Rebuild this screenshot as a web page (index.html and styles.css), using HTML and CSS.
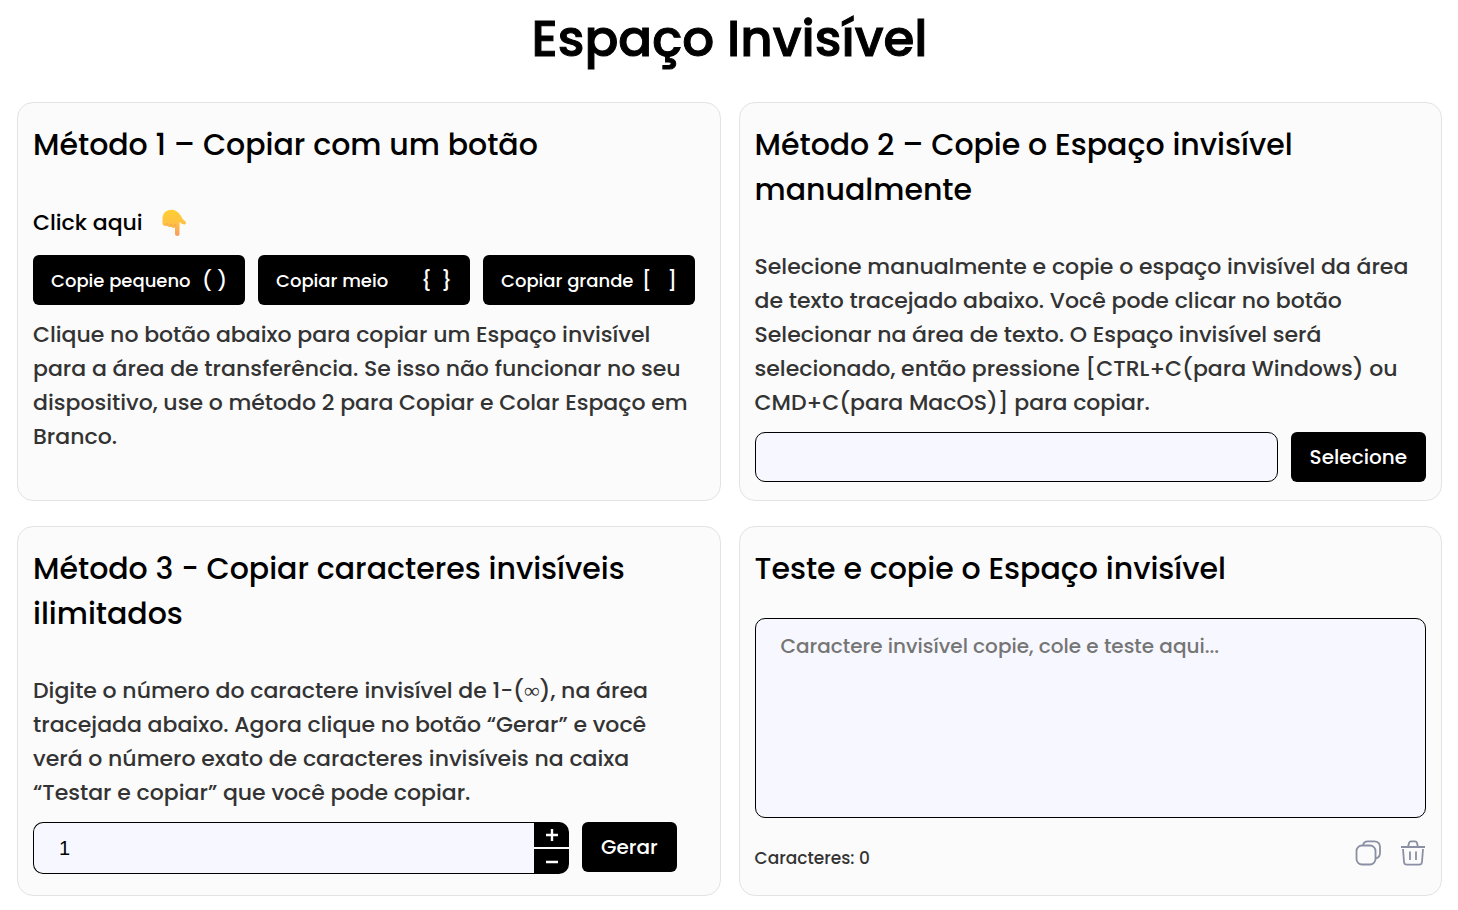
FILE: index.html
```html
<!DOCTYPE html>
<html lang="pt-BR">
<head>
    <meta charset="UTF-8">
    <meta name="viewport" content="width=device-width, initial-scale=1.0">
    <title>Espaço Invisível</title>
    <link rel="stylesheet" href="styles.css">
</head>
<body>
    <header>
        <h1>Espaço Invisível</h1>
    </header>

    <main class="tool-grid">
        <section class="card">
            <h2 class="card-title">Método 1 – Copiar com um botão</h2>
            <p class="click-here">Click aqui
                <svg class="hand" viewBox="0 0 26 28" aria-hidden="true">
                    <defs>
                        <linearGradient id="skin" x1="0" y1="0" x2="0" y2="1">
                            <stop offset="0" stop-color="#ffcf30"/>
                            <stop offset="0.5" stop-color="#ffc243"/>
                            <stop offset="1" stop-color="#f89a62"/>
                        </linearGradient>
                    </defs>
                    <path d="M1.5 12Q1 6 4 3Q8 0 13 1Q18 3 20 7Q21 10 24 12Q26 14 24 15.500Q22 16 18.500 13V25Q18.500 27 16.500 27Q14 27 14 25V18Q12 20 10 17.500Q8 19 6 16.500Q3 18 1.500 15Z" fill="url(#skin)"/>
                    <path d="M6 16.500V14M10 17.500V15M14 18V15" fill="none" stroke="#ed9144" stroke-width="0.6"/>
                </svg>
            </p>
            <div class="copy-buttons">
                <button type="button" class="btn btn-copy"><span>Copie pequeno</span><span class="mark">( )</span></button>
                <button type="button" class="btn btn-copy"><span>Copiar meio</span><span class="mark">{&nbsp; }</span></button>
                <button type="button" class="btn btn-copy"><span>Copiar grande</span><span class="mark">[ &nbsp; ]</span></button>
            </div>
            <p class="card-description">Clique no botão abaixo para copiar um Espaço invisível<br>para a área de transferência. Se isso não funcionar no seu<br>dispositivo, use o método 2 para Copiar e Colar Espaço em<br>Branco.</p>
        </section>

        <section class="card">
            <h2 class="card-title">Método 2 – Copie o Espaço invisível<br>manualmente</h2>
            <p class="card-description">Selecione manualmente e copie o espaço invisível da área<br>de texto tracejado abaixo. Você pode clicar no botão<br>Selecionar na área de texto. O Espaço invisível será<br>selecionado, então pressione [CTRL+C(para Windows) ou<br>CMD+C(para MacOS)] para copiar.</p>
            <div class="field-row">
                <input type="text" class="field" id="blank-text" aria-label="Espaço invisível">
                <button type="button" class="btn" id="select-btn">Selecione</button>
            </div>
        </section>

        <section class="card">
            <h2 class="card-title">Método 3 - Copiar caracteres invisíveis<br>ilimitados</h2>
            <p class="card-description">Digite o número do caractere invisível de 1-(<span class="infinity">∞</span>), na área<br>tracejada abaixo. Agora clique no botão “Gerar” e você<br>verá o número exato de caracteres invisíveis na caixa<br>“Testar e copiar” que você pode copiar.</p>
            <div class="field-row">
                <div class="number-box">
                    <input type="text" inputmode="numeric" class="field" id="amount" value="1" aria-label="Número de caracteres">
                    <div class="stepper">
                        <button type="button" id="plus" aria-label="Aumentar"><svg viewBox="0 0 14 14"><path d="M7 1v12M1 7h12"/></svg></button>
                        <button type="button" id="minus" aria-label="Diminuir"><svg viewBox="0 0 14 14"><path d="M1 7h12"/></svg></button>
                    </div>
                </div>
                <button type="button" class="btn" id="generate">Gerar</button>
            </div>
        </section>

        <section class="card">
            <h2 class="card-title">Teste e copie o Espaço invisível</h2>
            <textarea class="test-area" id="test-area" aria-label="Teste" placeholder="Caractere invisível copie, cole e teste aqui..."></textarea>
            <div class="test-footer">
                <span>Caracteres: <span id="count">0</span></span>
                <div class="actions">
                    <button type="button" id="copy" aria-label="Copiar">
                        <svg viewBox="0 0 26 26"><rect x="1.500" y="5.500" width="19" height="19" rx="5.500"/><path d="M8 5.500Q8.500 1.300 13 1.300H19Q25 1.300 25 7V13Q25 17.500 20.500 18.500"/></svg>
                    </button>
                    <button type="button" id="clear" aria-label="Limpar">
                        <svg viewBox="0 0 26 26"><path d="M1 7H25M8 7L9 3Q9.500 1.300 11 1.300H15Q16.500 1.300 17 3L18 7M3 9L4 22Q4.300 24.700 7 24.700H19Q21.700 24.700 22 22L23 9M10 11.500V20M16 11.500V20"/></svg>
                    </button>
                </div>
            </div>
        </section>
    </main>

    <script src="scripts.js"></script>
</body>
</html>
```

FILE: styles.css
```css
/* Base */
* {
    box-sizing: border-box;
}

body {
    margin: 0;
    padding: 0 16px 16px 17px;
    font-family: Poppins, Inter, "Open Sans", sans-serif;
    font-weight: 500;
    color: #000;
    background: #fff;
}

h1, h2, p {
    margin: 0;
}

h1 {
    padding-top: 4px;
    font-size: 50px;
    line-height: 70px;
    font-weight: 500;
    -webkit-text-stroke: 1px #000;
    text-align: center;
}

button, input, textarea {
    font: inherit;
}

button {
    cursor: pointer;
}

/* Cards */
.tool-grid {
    display: grid;
    grid-template-columns: 1fr 1fr;
    gap: 25px 18px;
    margin-top: 28px;
}

.card {
    min-width: 0;
    padding: 19px 15px 18px;
    border: 1px solid #e3e3e3;
    border-radius: 16px;
    background: #fbfbfb;
}

.card-title {
    font-size: 30px;
    line-height: 45px;
    font-weight: 500;
}

.card-description {
    font-size: 22px;
    line-height: 34px;
    color: #333;
}

.card-title + .card-description {
    margin-top: 38px;
}

.infinity {
    font-family: "Liberation Serif", serif;
    font-weight: 400;
    line-height: 1;
}

.click-here {
    display: flex;
    align-items: center;
    gap: 18px;
    margin-top: 39px;
    font-size: 22px;
    line-height: 34px;
}

.hand {
    width: 26px;
    height: 28px;
}

/* Buttons */
.btn {
    height: 50px;
    padding: 0 19px;
    border: 0;
    border-radius: 6px;
    font-size: 20px;
    color: #fff;
    background: #000;
}

.copy-buttons {
    display: flex;
    gap: 13px;
    margin: 15px 0 13px;
}

.btn-copy {
    display: flex;
    justify-content: space-between;
    align-items: center;
    width: 212px;
    padding: 0 18px;
    font-size: 18px;
    white-space: nowrap;
}

.mark {
    font-size: 20px;
}

/* Fields */
.field-row {
    display: flex;
    gap: 13px;
    margin-top: 12px;
}

.field {
    flex: 1;
    min-width: 0;
    height: 50px;
    padding: 0 25px;
    border: 1px solid #000;
    border-radius: 10px;
    font-size: 20px;
    background: #f7f8ff;
}

.number-box {
    display: flex;
    width: 536px;
    height: 52px;
}

.number-box .field {
    height: 52px;
    border-right: 0;
    border-radius: 10px 0 0 10px;
    font-family: "Liberation Sans", Arial, sans-serif;
    font-weight: 400;
}

.stepper {
    display: grid;
    gap: 2px;
    width: 35px;
    border-radius: 0 10px 10px 0;
    overflow: hidden;
}

.stepper button {
    padding: 0;
    border: 0;
    background: #000;
}

.test-area {
    display: block;
    width: 100%;
    height: 200px;
    margin-top: 27px;
    padding: 10px 25px;
    border: 1px solid #000;
    border-radius: 10px;
    font-size: 20px;
    line-height: 34px;
    background: #f7f8ff;
    resize: none;
}

.test-footer {
    display: flex;
    justify-content: space-between;
    align-items: flex-start;
    margin-top: 22px;
    font-size: 17px;
    line-height: 37px;
    color: #333;
}

.actions {
    display: flex;
    gap: 19px;
}

.actions button {
    padding: 0;
    border: 0;
    background: none;
}

.actions svg {
    display: block;
    width: 26px;
    height: 26px;
    fill: none;
    stroke: #8a8fa3;
    stroke-width: 1.8;
}

.stepper svg {
    display: block;
    width: 14px;
    height: 14px;
    margin: auto;
    stroke: #fff;
    stroke-width: 2.4;
}
```

FILE: scripts.js
```js
document.addEventListener('DOMContentLoaded', () => {
    const amount = document.getElementById('amount');
    const testArea = document.getElementById('test-area');
    const blankText = document.getElementById('blank-text');
    const count = document.getElementById('count');

    const updateCount = () => {
        count.textContent = testArea.value.length;
    };

    document.getElementById('plus').addEventListener('click', () => {
        amount.value = Number(amount.value) + 1;
    });

    document.getElementById('minus').addEventListener('click', () => {
        amount.value = Math.max(1, Number(amount.value) - 1);
    });

    document.getElementById('generate').addEventListener('click', () => {
        testArea.value = '\u3164'.repeat(Number(amount.value) || 1);
        updateCount();
    });

    document.getElementById('select-btn').addEventListener('click', () => blankText.select());

    document.getElementById('copy').addEventListener('click', () => {
        navigator.clipboard.writeText(testArea.value);
    });

    document.getElementById('clear').addEventListener('click', () => {
        testArea.value = '';
        updateCount();
    });

    testArea.addEventListener('input', updateCount);
});
```
